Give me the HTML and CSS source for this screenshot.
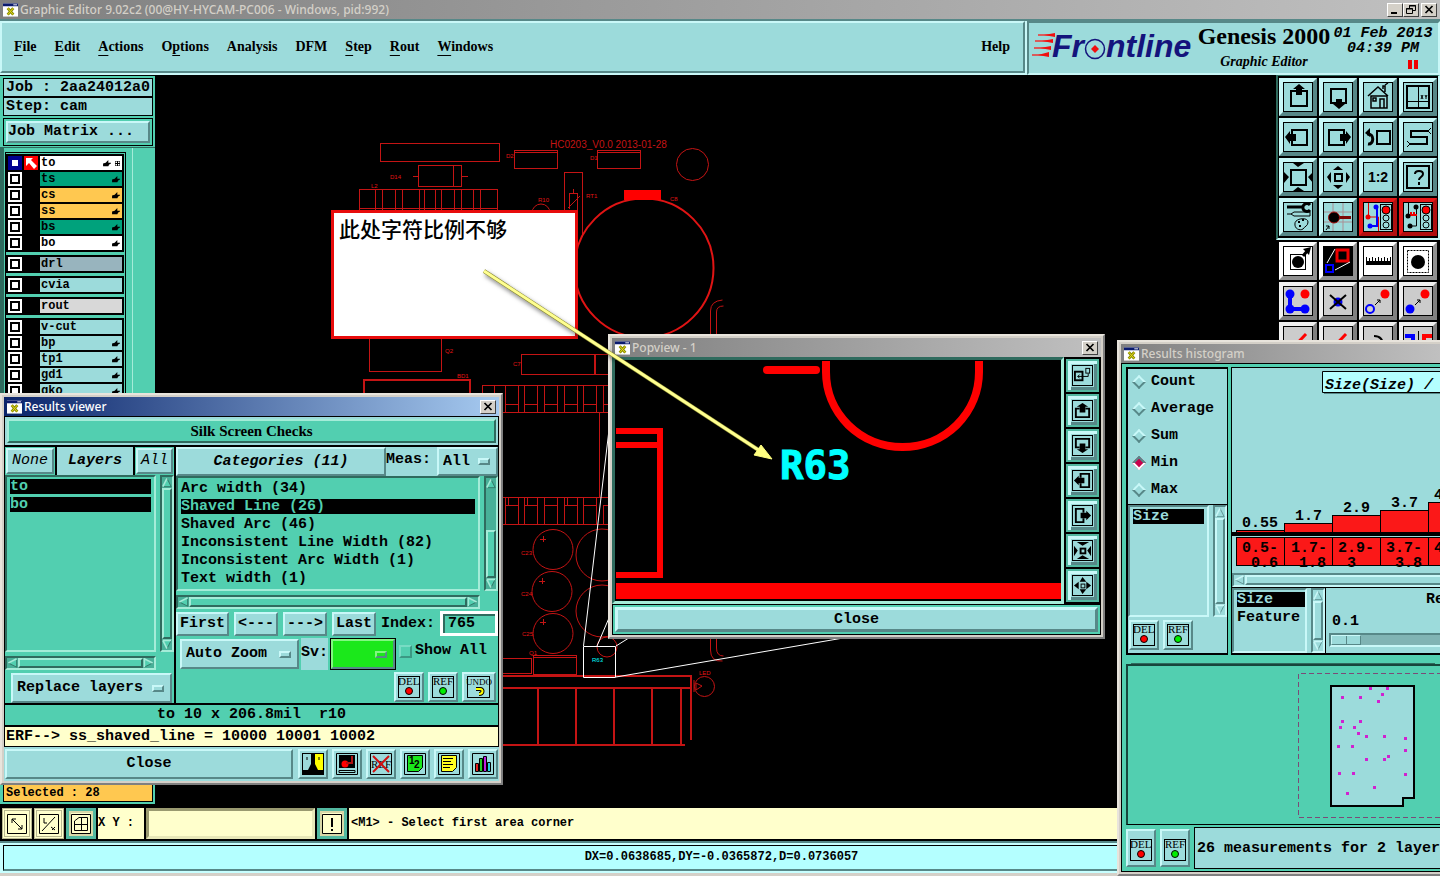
FILE: index.html
```html
<!DOCTYPE html>
<html lang="en">
<head>
	<meta charset="utf-8">
	<title>Graphic Editor 9.02c2</title>
	<link rel="stylesheet" href="styles.css">
</head>
<body>
	<!-- icon set -->
	<svg class="defs" width="0" height="0">
		<symbol id="i-app" viewBox="0 0 16 14"><rect width="16" height="14" fill="#fff"/><rect width="16" height="3" fill="#0a1a6e"/><rect x="11" y="1" width="4" height="1" fill="#fff"/><path d="M5 5l6 7M11 5l-6 7" stroke="#8a8a00" stroke-width="3"/><path d="M5 5l6 7M11 5l-6 7" stroke="#e8e020"/></symbol>
		<symbol id="i-x" viewBox="0 0 10 9"><path d="M1.500 1l7 7M8.500 1l-7 7" stroke="#000" stroke-width="1.700"/></symbol>
		<symbol id="i-hand" viewBox="0 0 9 8"><path d="M0 4l3-1 3-3v3h3v1L7 5 6 7H2L0 7z"/></symbol>
		<symbol id="i-up" viewBox="0 0 30 30"><rect x="8" y="9" width="16" height="15" fill="none" stroke="#000" stroke-width="2"/><path d="M16 2l6 5h-3v6h-6V7h-3z"/></symbol>
		<symbol id="i-down" viewBox="0 0 30 30"><rect x="8" y="7" width="15" height="14" fill="none" stroke="#000" stroke-width="2"/><path d="M16 27l6-5h-3v-5h-6v5h-3z"/></symbol>
		<symbol id="i-left" viewBox="0 0 30 30"><rect x="9" y="8" width="15" height="15" fill="none" stroke="#000" stroke-width="2"/><path d="M2 15l5-6v3h6v7H7v3z"/></symbol>
		<symbol id="i-right" viewBox="0 0 30 30"><rect x="6" y="8" width="15" height="15" fill="none" stroke="#000" stroke-width="2"/><path d="M28 15l-5-6v3h-6v7h6v3z"/></symbol>
		<symbol id="i-home" viewBox="0 0 30 30"><path d="M5 14L15 5l10 9M8 14v12h16V14zM10 16h3v3h-3zM17 26v-9h4v9M20 7V4h2v6M22 3l3-2" fill="none" stroke="#000" stroke-width="1.500"/></symbol>
		<symbol id="i-xy" viewBox="0 0 30 30"><rect x="4" y="4" width="22" height="22" fill="none" stroke="#000" stroke-width="2"/><path d="M15.500 4v22M4 19.500h22M18 13l2 4M20 13l-2 4M22 13l1 2 1-2M23 15v2" fill="none" stroke="#000"/></symbol>
		<symbol id="i-undo" viewBox="0 0 30 30"><rect x="14" y="9" width="13" height="13" fill="none" stroke="#000" stroke-width="2"/><path d="M4 12c8-1 7 11 1 10" fill="none" stroke="#000" stroke-width="3"/><path d="M2 11l5-5v9z"/></symbol>
		<symbol id="i-snake" viewBox="0 0 30 30"><path d="M25 9H8v6h16v7H7" fill="none" stroke="#000" stroke-width="2"/><path d="M25 9l3-3M25 9l3 3M7 22l-3-3M7 22l-3 3" stroke="#000"/></symbol>
		<symbol id="i-in" viewBox="0 0 30 30"><rect x="8" y="8" width="15" height="15" fill="none" stroke="#000" stroke-width="2"/><path d="M15 5l-5-4h11zM15 25l-5 4h11zM6 15l-5-5v11zM25 15l5-5v11z"/></symbol>
		<symbol id="i-out" viewBox="0 0 30 30"><rect x="12" y="12" width="7" height="7" fill="none" stroke="#000" stroke-width="2"/><path d="M15 4l5 4H10zM15 27l5-4H10zM4 15l4-5v11zM27 15l-4-5v11z"/></symbol>
		<symbol id="i-help" viewBox="0 0 30 30"><rect x="4" y="4" width="22" height="22" fill="none" stroke="#000" stroke-width="2"/><path d="M12 12c0-4 8-4 8 0 0 3-4 3-4 6M16 20v3" fill="none" stroke="#000" stroke-width="2"/></symbol>
		<symbol id="i-tools" viewBox="0 0 30 30"><path d="M4 5h17" stroke="#000" stroke-width="3"/><path d="M27 3a4 4 0 1 0 0 5" fill="none" stroke="#000" stroke-width="3"/><path d="M4 12h4l3-2h16v4H11l-3-2" fill="none" stroke="#000"/><path d="M12 21c1-5 13-6 13-1 0 4-3 4-5 7-3 2-9 0-8-6z" fill="none" stroke="#000"/><path d="M15 20h2M19 18h2M16 24h2" stroke="#000" stroke-width="2"/></symbol>
		<symbol id="i-pad" viewBox="0 0 30 30"><path d="M10 0v30M20 0v30M0 10h30M0 20h30" stroke="#a98f94"/><path d="M12 15.500h16" stroke="#7c0808" stroke-width="3"/><circle cx="11" cy="15.500" r="5.500" stroke="#a01010"/><path d="M3 28l3-4m-3 0h3v3" fill="none" stroke="#000"/></symbol>
		<symbol id="i-net1" viewBox="0 0 30 30"><path d="M5.500 0v15h10v15" fill="none" stroke="#e00000"/><path d="M14 6v18H8" fill="none" stroke="#00f" stroke-width="2"/><circle cx="5" cy="15" r="2.500" fill="#e00"/><circle cx="13" cy="5" r="2.500" fill="#00f"/><circle cx="7" cy="24" r="2.500" fill="#00f"/><rect x="17.500" y="2.500" width="11" height="25" fill="none" stroke="#000"/><circle cx="23" cy="8" r="4" fill="#f00" stroke="#000"/><circle cx="23" cy="16" r="3" fill="none" stroke="#000"/><circle cx="23" cy="23" r="3" fill="none" stroke="#000"/></symbol>
		<symbol id="i-net2" viewBox="0 0 30 30"><path d="M5.500 0v15M13.500 6v18H8" fill="none" stroke="#000"/><path d="M5 13h9M8 10v3M11 10v3" stroke="#e00" stroke-width="2"/><circle cx="5" cy="14" r="2.500"/><circle cx="13" cy="5" r="2.500"/><circle cx="7" cy="24" r="2.500"/><rect x="17.500" y="2.500" width="11" height="25" fill="none" stroke="#000"/><circle cx="23" cy="8" r="4" fill="#f00" stroke="#000"/><circle cx="23" cy="16" r="3" fill="none" stroke="#000"/><circle cx="23" cy="23" r="3" fill="none" stroke="#000"/></symbol>
		<symbol id="i-sel" viewBox="0 0 30 30"><rect x="7.500" y="8.500" width="15" height="15" fill="none" stroke="#000"/><circle cx="15" cy="16" r="6"/><path d="M20 10l5-6" stroke="#000" stroke-width="3"/><path d="M28 1l-8 2 6 6z"/></symbol>
		<symbol id="i-area" viewBox="0 0 30 30"><rect width="30" height="30"/><rect x="14" y="4" width="11" height="11" fill="none" stroke="#e00" stroke-width="3"/><rect x="3" y="19" width="7" height="7" fill="none" stroke="#00f" stroke-width="2"/><path d="M4 17L12 3M12 24l15-8" stroke="#fff"/></symbol>
		<symbol id="i-ruler" viewBox="0 0 30 30"><rect x="3" y="15" width="25" height="4"/><path d="M3.500 11v6M6.500 12v5M9.500 11v6M12.500 12v5M15.500 11v6M18.500 12v5M21.500 11v6M24.500 12v5M27.500 11v6" stroke="#000"/></symbol>
		<symbol id="i-dot" viewBox="0 0 30 30"><circle cx="15" cy="16" r="7"/><rect x="4.500" y="4.500" width="21" height="22" fill="none" stroke="#000" stroke-dasharray="2 1"/></symbol>
		<symbol id="i-chain" viewBox="0 0 30 30"><path d="M7 8v15h15" fill="none" stroke="#00f" stroke-width="4"/><circle cx="7" cy="8" r="4.500" fill="#00f"/><circle cx="7" cy="23" r="4.500" fill="#00f"/><circle cx="22" cy="23" r="4.500" fill="#00f"/><circle cx="22" cy="8" r="4.500" fill="#f00"/></symbol>
		<symbol id="i-del" viewBox="0 0 30 30"><circle cx="15" cy="16" r="4.500" fill="#00e"/><path d="M7 9l16 14M23 9L7 23" stroke="#000" stroke-width="2"/></symbol>
		<symbol id="i-copy" viewBox="0 0 30 30"><circle cx="7" cy="23" r="4" fill="none" stroke="#00f" stroke-width="2"/><circle cx="22" cy="8" r="4.500" fill="#f00"/><path d="M12 19l5-5m-3 0h3v3" fill="none" stroke="#000"/></symbol>
		<symbol id="i-move" viewBox="0 0 30 30"><circle cx="7" cy="23" r="4.500" fill="#00f"/><circle cx="22" cy="8" r="4.500" fill="#f00"/><path d="M12 19l5-5m-3 0h3v3" fill="none" stroke="#000"/></symbol>
		<symbol id="i-line" viewBox="0 0 30 30"><path d="M4 28L23 8" stroke="#f00" stroke-width="3"/></symbol>
		<symbol id="i-arc" viewBox="0 0 30 30"><path d="M11 10c6 0 9 4 9 10" fill="none" stroke="#000" stroke-width="2"/></symbol>
		<symbol id="i-mirror" viewBox="0 0 30 30"><path d="M2 10h8v20" fill="none" stroke="#00f" stroke-width="4"/><path d="M29 10h-8v20" fill="none" stroke="#f00" stroke-width="4"/><path d="M15.500 5v25" stroke="#000"/></symbol>
		<!-- 20px set -->
		<symbol id="p-link" viewBox="0 0 20 20"><rect x="2" y="6" width="8" height="9" fill="none" stroke="#000" stroke-width="2"/><rect x="13.500" y="2.500" width="4" height="5" fill="none" stroke="#000"/><path d="M16 8v3H5m2-2L5 11l2 2" fill="none" stroke="#000"/></symbol>
		<symbol id="p-up" viewBox="0 0 20 20"><path d="M7 8H3v9h14V8h-4" fill="none" stroke="#000" stroke-width="2"/><path d="M10 2l6 4h-3v6H7V6H4z"/></symbol>
		<symbol id="p-down" viewBox="0 0 20 20"><path d="M7 12H3V3h14v9h-4" fill="none" stroke="#000" stroke-width="2"/><path d="M10 18l6-4h-3V8H7v6H4z"/></symbol>
		<symbol id="p-left" viewBox="0 0 20 20"><path d="M8 7V3h9v14H8v-4" fill="none" stroke="#000" stroke-width="2"/><path d="M1 10l5-5v2h6v6H6v2z"/></symbol>
		<symbol id="p-right" viewBox="0 0 20 20"><path d="M11 7V3H3v14h8v-4" fill="none" stroke="#000" stroke-width="2"/><path d="M19 10l-5-5v2H8v6h6v2z"/></symbol>
		<symbol id="p-in" viewBox="0 0 20 20"><rect x="8" y="8" width="5" height="5" fill="none" stroke="#000" stroke-width="2"/><path d="M10 5L4 1h13zM10 15l-6 4h13zM5 10L1 5v11zM15 10l4-5v11z"/></symbol>
		<symbol id="p-out" viewBox="0 0 20 20"><rect x="8.500" y="8.500" width="4" height="4" fill="none" stroke="#000"/><path d="M10 1l4 5H7zM10 19l4-5H7zM1 10l5-4v8zM19 10l-5-4v8z"/></symbol>
		<!-- 22px set, captions are set where used -->
		<symbol id="b-red" viewBox="0 0 22 22"><rect x=".5" y=".5" width="21" height="21" fill="none" stroke="#000"/><circle cx="11" cy="15" r="3.500" fill="#f00" stroke="#000"/></symbol>
		<symbol id="b-green" viewBox="0 0 22 22"><rect x=".5" y=".5" width="21" height="21" fill="none" stroke="#000"/><circle cx="11" cy="15" r="3.500" fill="#0e0" stroke="#000"/></symbol>
		<symbol id="b-back" viewBox="0 0 26 22"><rect x="1.500" y=".5" width="22" height="21" fill="none" stroke="#000"/><path d="M10 13h4c4 0 3 5-1 5" fill="none" stroke="#000" stroke-width="4"/><path d="M10 13h4c4 0 3 5-1 5" fill="none" stroke="#ff0" stroke-width="2"/></symbol>
		<!-- scroll arrows -->
		<symbol id="s-up" viewBox="0 0 12 12"><path d="M6 1L1 11h10z" fill="var(--face)" stroke="var(--lo)"/><path d="M6 1L1 11" stroke="var(--hi)" stroke-width="2"/></symbol>
		<symbol id="s-down" viewBox="0 0 12 12"><path d="M1 1h10L6 11z" fill="var(--face)" stroke="var(--lo)"/><path d="M1 1h10M1 1l5 10" stroke="var(--hi)" stroke-width="2"/></symbol>
		<symbol id="s-left" viewBox="0 0 12 12"><path d="M1 6l10-5v10z" fill="var(--face)" stroke="var(--lo)"/><path d="M1 6l10-5" stroke="var(--hi)" stroke-width="2"/></symbol>
		<symbol id="s-right" viewBox="0 0 12 12"><path d="M11 6L1 1v10z" fill="var(--face)" stroke="var(--lo)"/><path d="M1 11V1l10 5" fill="none" stroke="var(--hi)" stroke-width="2"/></symbol>
	</svg>

	<div class="editor">
		<header class="caption">
			<svg class="app"><use href="#i-app"/></svg>
			<h1>Graphic Editor 9.02c2 (00@HY-HYCAM-PC006 - Windows, pid:992)</h1>
			<button class="win" aria-label="Minimize"><svg viewBox="0 0 10 9"><path d="M1 8h6" stroke="#000" stroke-width="2"/></svg></button>
			<button class="win" aria-label="Restore"><svg viewBox="0 0 10 9"><path d="M3.500 3V.5h6v5H7M3 1h7M.5 3.500h6v5h-6zM0 4h7" fill="none" stroke="#000"/></svg></button>
			<button class="win last" aria-label="Close"><svg><use href="#i-x"/></svg></button>
		</header>

		<div class="topbar">
			<nav class="menu bevel">
				<button><u>F</u>ile</button>
				<button><u>E</u>dit</button>
				<button><u>A</u>ctions</button>
				<button>O<u>p</u>tions</button>
				<button>Analysis</button>
				<button>DFM</button>
				<button><u>S</u>tep</button>
				<button><u>R</u>out</button>
				<button><u>W</u>indows</button>
				<button class="help">Help</button>
			</nav>
			<div class="brand">
				<svg class="logo" viewBox="0 0 164 34" role="img" aria-label="Frontline">
					<path d="M6 5h17M3 11h18M2 18h17M0 25h17" stroke="#e33" stroke-width="1.500"/>
					<path d="M12 5l11-2v4zM10 11l11-2v4zM8 18l11-2v4zM6 25l11-3v5z" fill="#f01010"/>
					<text x="20" y="27">Fr</text>
					<circle cx="63" cy="19" r="9.500" fill="none" stroke="#14147c" stroke-width="1.500"/>
					<path d="M63 15l4 4-4 4-4-4z" fill="#f01010"/>
					<text x="74" y="27">ntline</text>
				</svg>
				<div class="product">
					<strong>Genesis 2000</strong>
					<em>Graphic Editor</em>
				</div>
				<div class="clock">
					<span>01 Feb 2013</span>
					<span>04:39 PM</span>
					<svg viewBox="0 0 10 9"><path d="M0 0h4v9H0zM6 0h4v9H6z" fill="#f00000"/></svg>
				</div>
			</div>
		</div>

		<main class="work">
			<aside class="side">
				<div class="info">Job : 2aa24012a0</div>
				<div class="info">Step: cam</div>
				<div class="matrix"><button class="bevel">Job Matrix ...</button></div>
				<div class="layers">
					<div class="stack">
						<div class="group">
							<label class="layer on"><input type="checkbox" checked><span class="mark"><svg viewBox="0 0 14 14"><rect width="14" height="14" fill="#f00"/><path d="M2 2h7L7 4l6 6-3 3-5-6-3 3z" fill="#fff"/></svg></span><span class="name white">to<svg class="hand"><use href="#i-hand"/></svg><svg class="grid" viewBox="0 0 5 5"><path d="M0 0h5v5H0zM2.500 0v5M0 2.500h5" fill="none" stroke="#000"/></svg></span></label>
							<label class="layer"><input type="checkbox"><span class="mark"></span><span class="name green">ts<svg class="hand"><use href="#i-hand"/></svg></span></label>
							<label class="layer"><input type="checkbox"><span class="mark"></span><span class="name orange">cs<svg class="hand"><use href="#i-hand"/></svg></span></label>
							<label class="layer"><input type="checkbox"><span class="mark"></span><span class="name orange">ss<svg class="hand"><use href="#i-hand"/></svg></span></label>
							<label class="layer"><input type="checkbox"><span class="mark"></span><span class="name green">bs<svg class="hand"><use href="#i-hand"/></svg></span></label>
							<label class="layer"><input type="checkbox"><span class="mark"></span><span class="name white">bo<svg class="hand"><use href="#i-hand"/></svg></span></label>
						</div>
						<div class="group">
							<label class="layer"><input type="checkbox"><span class="mark"></span><span class="name steel">drl</span></label>
						</div>
						<div class="group">
							<label class="layer"><input type="checkbox"><span class="mark"></span><span class="name">cvia</span></label>
						</div>
						<div class="group">
							<label class="layer"><input type="checkbox"><span class="mark"></span><span class="name grey">rout</span></label>
						</div>
						<div class="group">
							<label class="layer"><input type="checkbox"><span class="mark"></span><span class="name">v-cut</span></label>
							<label class="layer"><input type="checkbox"><span class="mark"></span><span class="name">bp<svg class="hand"><use href="#i-hand"/></svg></span></label>
							<label class="layer"><input type="checkbox"><span class="mark"></span><span class="name">tp1<svg class="hand"><use href="#i-hand"/></svg></span></label>
							<label class="layer"><input type="checkbox"><span class="mark"></span><span class="name">gd1<svg class="hand"><use href="#i-hand"/></svg></span></label>
							<label class="layer"><input type="checkbox"><span class="mark"></span><span class="name">gko<svg class="hand"><use href="#i-hand"/></svg></span></label>
						</div>
					</div>
				</div>
				<div class="selected">Selected : 28</div>
			</aside>

			<svg class="board">
				<g transform="translate(-155 -75)">
					<g fill="none" stroke="#c41414" shape-rendering="crispEdges">
						<path d="M380.500 143.500h119v18h-119zM418.500 165.500h43v21h-43zM453.500 165v21M413 176.500h5M461 176.500h7"/>
						<path d="M514.500 150.500h43v18h-43zM514 152.500h43M597.500 150.500h43v18h-43zM597 152.500h43"/>
						<path d="M359.500 211v-21.500h138V211M375.500 190v20M382.500 190v20M395.500 190v20M402.500 190v20M419.500 190v20M424.500 190v20M435.500 190v20M441.500 190v20M454.500 190v20M461.500 190v20M473.500 190v20M480.500 190v20M359 208.500h139"/>
						<path d="M564.500 172.500h18v64M564.500 172v38M569.500 193.500h8v16M569.500 193v16M573 189v4M568 208l12-12"/>
						<path d="M369.500 338v33h72v-33M521.500 354.500h73v20h-73zM595.500 354.500h14v20h-14z"/>
						<path d="M363.500 395v-15h106v15" stroke-width="2"/>
						<path d="M482.500 395v-9.500H609M494.500 386v9M505.500 386v26M518.500 386v26M524.500 386v26M537.500 386v26M544.500 386v26M557.500 386v26M564.500 386v26M577.500 386v26M583.500 386v26M596.500 386v26M603.500 386v26M500 412.500h109M505 404.500h13M524 404.500h13M544 404.500h13M564 404.500h13M583 404.500h13M603 404.500h6M599.500 412v85"/>
						<path d="M500 497.500h109M500 524.500h109M505.500 498v26M508.500 498v8M518.500 498v26M524.500 498v26M527.500 498v8M537.500 498v26M544.500 498v26M557.500 498v26M564.500 498v26M567.500 498v8M577.500 498v26M583.500 498v26M596.500 498v26M603.500 505v19M505 505.500h13M524 505.500h13M544 505.500h13M564 505.500h13M583 505.500h13M603 505.500h6"/>
						<path d="M500 658.500h31.500v15H500M533.500 655.500h43v19h-43zM533 657.500h43"/>
						<path d="M540 539h6M543 536v6M539 581h6M542 578v6M540 622h6M543 619v6"/>
						<path d="M500 676h191v64M500 688h191M500 745h185M538 688v57M576 688v57M614 688v57M652 688v57M681 688v57" stroke-width="2"/>
					</g>
					<g fill="none" stroke="#c41414">
						<circle cx="692.500" cy="164.500" r="16"/>
						<circle cx="644" cy="268" r="69.500" stroke-width="2" stroke="#e01414"/>
						<circle cx="541" cy="213" r="9"/>
						<circle cx="553" cy="549.500" r="20"/>
						<circle cx="552" cy="591.500" r="20"/>
						<circle cx="553" cy="633.500" r="20"/>
						<circle cx="602" cy="555" r="26"/>
						<circle cx="602" cy="611" r="26"/>
						<circle cx="607" cy="647" r="10"/>
						<circle cx="704.500" cy="686.500" r="10"/>
						<path d="M710.500 340v-29q0-10 12-11M716.500 340v-28q0-6 7-6M710.500 630v20q0 12 12 11M716.500 630v18q0 8 7 8M696 683l6 3-6 4zM694 680v12"/>
					</g>
					<rect x="624" y="190" width="37" height="10" fill="#f00"/>
					<g class="silk">
						<text class="rev" x="550" y="148">HC0203_V0.0 2013-01-28</text>
						<text x="506" y="158">D2</text>
						<text x="590" y="160">D1</text>
						<text x="390" y="179">D14</text>
						<text x="371" y="188">L2</text>
						<text x="538" y="202">R10</text>
						<text x="586" y="198">RT1</text>
						<text x="670" y="201">C8</text>
						<text x="445" y="353">Q2</text>
						<text x="513" y="366">C7</text>
						<text x="457" y="378">BD1</text>
						<text x="521" y="555">C23</text>
						<text x="521" y="596">C24</text>
						<text x="522" y="636">C25</text>
						<text x="529" y="655">Q1</text>
						<text x="699" y="675">LED</text>
						<text class="hot" x="592" y="662">R63</text>
					</g>
					<path d="M583.500 646.500h32v31h-32zM583.500 646l25-212M597 646l12-28M616 646l16-10M616 677l239-41" fill="none" stroke="#fff"/>
				</g>
			</svg>

			<div class="tools">
				<div class="pad">
					<button><svg><use href="#i-up"/></svg></button>
					<button><svg><use href="#i-down"/></svg></button>
					<button><svg><use href="#i-home"/></svg></button>
					<button><svg><use href="#i-xy"/></svg></button>
					<button><svg><use href="#i-left"/></svg></button>
					<button><svg><use href="#i-right"/></svg></button>
					<button><svg><use href="#i-undo"/></svg></button>
					<button><svg><use href="#i-snake"/></svg></button>
					<button><svg><use href="#i-in"/></svg></button>
					<button><svg><use href="#i-out"/></svg></button>
					<button><svg viewBox="0 0 30 30"><text class="ratio" x="15" y="20">1:2</text></svg></button>
					<button><svg><use href="#i-help"/></svg></button>
					<button><svg><use href="#i-tools"/></svg></button>
					<button><svg><use href="#i-pad"/></svg></button>
					<button class="alert"><svg><use href="#i-net1"/></svg></button>
					<button class="alert"><svg><use href="#i-net2"/></svg></button>
				</div>
				<div class="pad plain">
					<button class="lit"><svg><use href="#i-sel"/></svg></button>
					<button class="lit"><svg><use href="#i-area"/></svg></button>
					<button class="lit"><svg><use href="#i-ruler"/></svg></button>
					<button class="lit"><svg><use href="#i-dot"/></svg></button>
					<button><svg><use href="#i-chain"/></svg></button>
					<button><svg><use href="#i-del"/></svg></button>
					<button><svg><use href="#i-copy"/></svg></button>
					<button><svg><use href="#i-move"/></svg></button>
					<button><svg><use href="#i-line"/></svg></button>
					<button><svg><use href="#i-line"/></svg></button>
					<button><svg><use href="#i-arc"/></svg></button>
					<button><svg><use href="#i-mirror"/></svg></button>
				</div>
			</div>
		</main>

		<div class="command">
			<button class="cmd" aria-label="Snap"><svg viewBox="0 0 20 20"><path d="M.5.500h19v19H.500zM5 5l10 10M5 9V5h4M15 11v4h-4" fill="none" stroke="#000"/></svg></button>
			<button class="cmd" aria-label="Angle"><svg viewBox="0 0 20 20"><path d="M.5.500h19v19H.500zM3 17L16 3M5 4v5h3M12 13l4 3M16 13l-3 3" fill="none" stroke="#000"/></svg></button>
			<button class="cmd ring" aria-label="Grid"><svg viewBox="0 0 20 20"><path d="M.5.500h19v19H.500zM3.500 16.500V7L8 3.500h8.500v13zM10.500 3v14M3 10.500h14" fill="none" stroke="#000"/></svg></button>
			<label for="xy">X Y :</label>
			<input id="xy" type="text">
			<button class="cmd ring" aria-label="Alert"><svg viewBox="0 0 20 20"><path d="M.5.500h19v19H.500z" fill="none" stroke="#000"/><path d="M10 4v9M10 15v2" stroke="#000" stroke-width="2"/></svg></button>
			<output>&lt;M1&gt; - Select first area corner</output>
		</div>
		<footer class="status"><div>DX=0.0638685,DY=-0.0365872,D=0.0736057</div></footer>
	</div>

	<div class="note">此处字符比例不够</div>

	<!-- results viewer -->
	<section class="window results">
		<header class="caption active">
			<svg class="app"><use href="#i-app"/></svg>
			<h2>Results viewer</h2>
			<button class="win last" aria-label="Close"><svg><use href="#i-x"/></svg></button>
		</header>
		<div class="check"><div>Silk Screen Checks</div></div>
		<div class="panes">
			<div class="left">
				<div class="heads">
					<button class="bevel thin">None</button>
					<span>Layers</span>
					<button class="bevel thin">All</button>
				</div>
				<div class="lister">
					<ul class="list">
						<li class="sel">to</li>
						<li class="sel">bo</li>
					</ul>
					<div class="vbar"><svg><use href="#s-up"/></svg><i></i><svg><use href="#s-down"/></svg></div>
				</div>
				<div class="hbar"><svg><use href="#s-left"/></svg><i></i><svg><use href="#s-right"/></svg></div>
				<div class="option wide"><select aria-label="Layer mode"><option>Replace layers</option></select><i></i></div>
			</div>
			<div class="right">
				<div class="cats">
					<button class="bevel">Categories (11)</button>
					<label for="meas">Meas:</label>
					<div class="option"><select id="meas"><option>All</option></select><i></i></div>
				</div>
				<div class="lister">
					<ul class="list">
						<li>Arc width (34)</li>
						<li class="sel">Shaved Line (26)</li>
						<li>Shaved Arc (46)</li>
						<li>Inconsistent Line Width (82)</li>
						<li>Inconsistent Arc Width (1)</li>
						<li>Text width (1)</li>
					</ul>
					<div class="vbar low"><svg><use href="#s-up"/></svg><i></i><svg><use href="#s-down"/></svg></div>
				</div>
				<div class="hbar"><svg><use href="#s-left"/></svg><i></i><svg><use href="#s-right"/></svg></div>
				<div class="steps">
					<button class="bevel">First</button>
					<button class="bevel">&lt;---</button>
					<button class="bevel">---&gt;</button>
					<button class="bevel">Last</button>
					<label for="index">Index:</label>
					<input id="index" type="text" value="765">
				</div>
				<div class="zooms">
					<div class="option"><select aria-label="Zoom mode"><option>Auto Zoom</option></select><i></i></div>
					<label for="sv">Sv:</label>
					<div class="option go"><select id="sv"><option></option></select><i></i></div>
					<label class="all"><input type="checkbox">Show All</label>
				</div>
				<div class="acts">
					<button class="mini"><svg viewBox="0 0 22 22"><use href="#b-red"/><text class="cap" x="0" y="9">DEL</text></svg></button>
					<button class="mini"><svg viewBox="0 0 22 22"><use href="#b-green"/><text class="cap" x="1" y="9">REF</text></svg></button>
					<button class="mini broad"><svg viewBox="0 0 26 22"><use href="#b-back"/><text class="cap undo" x="0" y="9">UNDO</text></svg></button>
				</div>
			</div>
		</div>
		<div class="measure">to 10 x 206.8mil &nbsp;r10</div>
		<div class="erf">ERF--&gt; ss_shaved_line = 10000 10001 10002</div>
		<div class="bottom">
			<button class="bevel close">Close</button>
			<button class="mini"><svg viewBox="0 0 22 22"><rect width="22" height="22"/><path d="M1 1h8v10l-3 6H1z" fill="#9cdbdb"/><path d="M13 1h8v16h-5l-3-6z" fill="#ff0"/><path d="M5 4v3M17 4v3" stroke="#000"/></svg></button>
			<button class="mini"><svg viewBox="0 0 22 22"><path d="M.5.500h21v21H.500z" fill="none" stroke="#000"/><path d="M3 2h16v13H3z"/><circle cx="9" cy="11" r="3.500" fill="#f00"/><path d="M10 10h6V3" fill="none" stroke="#b01010" stroke-width="2"/><path d="M3 17.500h16v2H3z" fill="none" stroke="#000"/></svg></button>
			<button class="mini"><svg viewBox="0 0 22 22"><path d="M.5.500h21v21H.500z" fill="none" stroke="#000"/><text class="cap" x="1" y="15">REF</text><path d="M3 3l16 16M19 3L3 19" stroke="#d01010" stroke-width="2"/></svg></button>
			<button class="mini"><svg viewBox="0 0 22 22"><path d="M.5.500h21v21H.500z" fill="none" stroke="#000"/><path d="M3.500 2.500h15v12l-4 4h-11z" fill="#1be81b" stroke="#000"/><text class="half" x="5" y="11">1</text><text class="half" x="10" y="15">2</text></svg></button>
			<button class="mini"><svg viewBox="0 0 22 22"><path d="M.5.500h21v21H.500z" fill="none" stroke="#000"/><path d="M3.500 2.500h15v12l-4 4h-11z" fill="#ffff20" stroke="#000"/><path d="M5 5.500h10M5 8.500h8M5 11.500h10M5 14.500h7" stroke="#000"/></svg></button>
			<button class="mini"><svg viewBox="0 0 22 22"><path d="M.5.500h21v21H.500z" fill="none" stroke="#000"/><path d="M3.500 10.500h3v8h-3z" fill="#e02020" stroke="#000"/><path d="M7.500 5.500h3v13h-3z" fill="#20d020" stroke="#000"/><path d="M11.500 3.500h3v15h-3z" fill="#c020e0" stroke="#000"/><path d="M15.500 9.500h3v9h-3z" fill="#20d0e0" stroke="#000"/></svg></button>
		</div>
	</section>

	<!-- popview -->
	<section class="window popview">
		<header class="caption">
			<svg class="app"><use href="#i-app"/></svg>
			<h2>Popview - 1</h2>
			<button class="win last" aria-label="Close"><svg><use href="#i-x"/></svg></button>
		</header>
		<div class="view">
			<svg class="detail">
				<g transform="translate(-615 -360)">
					<g fill="none" stroke="#f00" stroke-width="6">
						<path d="M616 431h44v144h-44M616 445h47"/>
						<path d="M767 370h49" stroke-width="8" stroke-linecap="round"/>
						<path d="M826 361v11a76.500 75 0 0 0 153 0v-11" stroke-width="8"/>
					</g>
					<rect x="616" y="583" width="445" height="16" fill="#f00"/>
					<text x="780" y="479">R63</text>
				</g>
			</svg>
			<div class="nav">
				<button><svg><use href="#p-link"/></svg></button>
				<button><svg><use href="#p-up"/></svg></button>
				<button><svg><use href="#p-down"/></svg></button>
				<button><svg><use href="#p-left"/></svg></button>
				<button><svg><use href="#p-right"/></svg></button>
				<button><svg><use href="#p-in"/></svg></button>
				<button><svg><use href="#p-out"/></svg></button>
			</div>
		</div>
		<div class="foot"><button class="bevel">Close</button></div>
	</section>

	<!-- histogram -->
	<section class="window histogram">
		<header class="caption">
			<svg class="app"><use href="#i-app"/></svg>
			<h2>Results histogram</h2>
		</header>
		<div class="body">
			<div class="upper">
				<div class="stats">
					<div class="modes">
						<label><input type="radio" name="mode">Count</label>
						<label><input type="radio" name="mode">Average</label>
						<label><input type="radio" name="mode">Sum</label>
						<label><input type="radio" name="mode" checked>Min</label>
						<label><input type="radio" name="mode">Max</label>
					</div>
					<div class="lister">
						<ul class="list"><li class="sel">Size</li></ul>
						<div class="vbar"><svg><use href="#s-up"/></svg><i></i><svg><use href="#s-down"/></svg></div>
					</div>
					<div class="acts">
						<button class="mini"><svg viewBox="0 0 22 22"><use href="#b-red"/><text class="cap" x="0" y="9">DEL</text></svg></button>
						<button class="mini"><svg viewBox="0 0 22 22"><use href="#b-green"/><text class="cap" x="1" y="9">REF</text></svg></button>
					</div>
				</div>
				<div class="plot">
					<svg class="chart">
						<g transform="translate(-1232 -368)">
							<path d="M1324 373h120v21h-120z" fill="#578888"/>
							<path d="M1322.500 371.500h120v21h-120z" fill="#b4ffff" stroke="#000"/>
							<text class="head" x="1325" y="389">Size(Size) /</text>
							<g fill="#fb1818" stroke="#000" shape-rendering="crispEdges">
								<path d="M1236.500 530.500h48v3h-48zM1284.500 523.500h48v10h-48zM1332.500 515.500h48v18h-48zM1380.500 510.500h48v23h-48zM1428.500 502.500h48v31h-48z"/>
								<path d="M1236.500 537.500h48v28h-48zM1284.500 537.500h48v28h-48zM1332.500 537.500h48v28h-48zM1380.500 537.500h48v28h-48zM1428.500 537.500h48v28h-48z"/>
							</g>
							<path d="M1230 532h220v4h-220z"/>
							<text x="1242" y="527">0.55</text>
							<text x="1295" y="520">1.7</text>
							<text x="1343" y="512">2.9</text>
							<text x="1391" y="507">3.7</text>
							<text x="1434" y="499">4.4</text>
							<text x="1242" y="552">0.5-</text><text x="1251" y="567">0.6</text>
							<text x="1291" y="552">1.7-</text><text x="1299" y="567">1.8</text>
							<text x="1338" y="552">2.9-</text><text x="1347" y="567">3</text>
							<text x="1386" y="552">3.7-</text><text x="1395" y="567">3.8</text>
							<text x="1434" y="552">4.4-</text>
						</g>
					</svg>
					<div class="hbar"><svg><use href="#s-left"/></svg><i></i></div>
					<div class="range">
						<div class="lister">
							<ul class="list"><li class="sel">Size</li><li>Feature</li></ul>
							<div class="vbar"><svg><use href="#s-up"/></svg><i></i><svg><use href="#s-down"/></svg></div>
						</div>
						<div class="res">
							<span class="title">Resolution</span>
							<label for="res">0.1</label>
							<input id="res" type="range" value="0">
						</div>
					</div>
				</div>
			</div>
			<div class="map">
				<svg>
					<g transform="translate(-1128 -665)">
						<path d="M1450 672.500h-151.500v144H1450" fill="none" stroke="#7c4a78" stroke-dasharray="5 3"/>
						<path d="M1331 685h83v112h-11v8h-72z" fill="#9cdbdb" stroke="#000" stroke-width="2"/>
						<path d="M1369 686h3v3h-3zM1386 686h3v3h-3zM1381 692h3v3h-3zM1341 695h3v3h-3zM1359 695h3v3h-3zM1377 699h3v3h-3zM1341 719h3v3h-3zM1359 719h3v3h-3zM1339 725h3v3h-3zM1353 725h3v3h-3zM1357 731h3v3h-3zM1365 734h3v3h-3zM1383 734h3v3h-3zM1404 736h3v3h-3zM1337 744h3v3h-3zM1351 744h3v3h-3zM1404 748h3v3h-3zM1387 754h3v3h-3zM1365 757h3v3h-3zM1383 757h3v3h-3zM1338 771h3v3h-3zM1352 771h3v3h-3zM1404 772h3v3h-3zM1373 785h3v3h-3zM1346 791h3v3h-3z" fill="#d020d0"/>
					</g>
				</svg>
			</div>
			<div class="summary">
				<button class="mini"><svg viewBox="0 0 22 22"><use href="#b-red"/><text class="cap" x="0" y="9">DEL</text></svg></button>
				<button class="mini"><svg viewBox="0 0 22 22"><use href="#b-green"/><text class="cap" x="1" y="9">REF</text></svg></button>
				<div>26 measurements for 2 layers</div>
			</div>
		</div>
	</section>

	<svg class="pointer" viewBox="0 0 300 200">
		<path d="M6 7l276 180" stroke="#8a8a30" stroke-width="4"/>
		<path d="M6 7l276 180" stroke="#ffff90" stroke-width="3"/>
		<path d="M294 195l-18-4 3-4 4-6z" fill="#ffff80" stroke="#ffff80"/>
	</svg>
</body>
</html>
```
FILE: styles.css
```css
* {
	box-sizing: border-box;
}

:root {
	--face: #9cdbdb;
	--hi: #c9f8f8;
	--lo: #578888;
}

body {
	margin: 0;
	height: 100vh;
	overflow: hidden;
	position: relative;
	background: #000;
	color: #000;
	font: bold 15px/18px "Liberation Mono", monospace;
}

button, input, select {
	font: inherit;
	color: inherit;
	margin: 0;
	padding: 0;
	border: 0;
	border-radius: 0;
	background: var(--face);
}

svg {
	display: block;
	flex: none;
}

.defs {
	position: absolute;
}

.cap {
	font: 11px "Liberation Serif", serif;
}

.cap.undo {
	font-size: 9px;
}

.half {
	font: bold 10px "Liberation Sans", sans-serif;
}

.bevel {
	background: var(--face);
	border: 3px solid;
	border-color: var(--hi) var(--lo) var(--lo) var(--hi);
}

/* window captions */
.caption {
	display: flex;
	align-items: center;
	height: 19px;
	padding: 0 3px;
	background: linear-gradient(90deg, #808080, #c0c0c0);
	color: #d4d0c8;
}

.caption.active {
	background: linear-gradient(90deg, #0a246a, #a6caf0);
	color: #fff;
}

.caption h1, .caption h2 {
	flex: 1;
	margin: 0 0 0 2px;
	font: 500 12px/18px "Noto Sans", sans-serif;
	white-space: nowrap;
}

.app {
	width: 15px;
	height: 14px;
}

.win {
	display: flex;
	align-items: center;
	justify-content: center;
	width: 16px;
	height: 14px;
	background: #d4d0c8;
	border: 1px solid;
	border-color: #fff #404040 #404040 #fff;
}

.win.last {
	margin-left: 2px;
}

.win svg {
	width: 10px;
	height: 9px;
}

/* main editor */
.editor {
	display: flex;
	flex-direction: column;
	height: 100vh;
}

.topbar {
	display: flex;
	height: 56px;
	background: var(--hi);
	border-top: 2px solid var(--lo);
}

.menu {
	flex: 1;
	display: flex;
	align-items: center;
	gap: 18px;
	margin-bottom: 2px;
	padding: 0 13px 0 12px;
	border-width: 2px;
	font: bold 14px/18px "Liberation Serif", serif;
}

.menu u {
	text-underline-offset: 4px;
}

.menu .help {
	margin-left: auto;
}

.brand {
	display: flex;
	width: 413px;
	margin-left: 2px;
	padding: 3px 4px 0 3px;
	background: var(--face);
	border: 2px solid;
	border-color: var(--lo) var(--hi) var(--hi) var(--lo);
}

.logo {
	width: 164px;
	height: 34px;
	margin-top: 4px;
}

.logo text {
	font: italic bold 32px "Liberation Sans", sans-serif;
	fill: #14147c;
}

.product {
	display: flex;
	flex-direction: column;
	align-items: center;
	width: 136px;
	font-family: "Liberation Serif", serif;
	white-space: nowrap;
}

.product strong {
	font-size: 24px;
	line-height: 20px;
}

.product em {
	margin-top: 7px;
	font-size: 14px;
}

.clock {
	flex: 1;
	display: flex;
	flex-direction: column;
	align-items: center;
	font-style: italic;
	line-height: 15px;
	white-space: nowrap;
}

.clock svg {
	width: 10px;
	height: 9px;
	margin: 4px 16px 0 0;
	align-self: flex-end;
}

.work {
	flex: 1;
	display: flex;
	min-height: 0;
}

/* left side */
.side {
	--face: #52cfb0;
	--hi: #a4ecd8;
	--lo: #2f6b5e;
	display: flex;
	flex-direction: column;
	width: 155px;
	margin-bottom: 3px;
	padding: 2px 2px 2px 3px;
	background: var(--face);
	border-top: 1px solid #000;
}

.info {
	padding-left: 2px;
	height: 19px;
	line-height: 17px;
	border: 1px solid #000;
	background: #9cdbdb;
	white-space: nowrap;
	overflow: hidden;
}

.matrix {
	--face: #9cdbdb;
	--hi: #c9f8f8;
	--lo: #578888;
	margin: 2px 0 1px;
	padding: 2px;
	border: 1px solid #000;
}

.matrix button {
	width: 100%;
	height: 22px;
	line-height: 16px;
	text-align: left;
	border-width: 2px;
}

.layers {
	flex: 1;
	min-height: 0;
	overflow: hidden;
	margin: 0 -2px 3px -3px;
	padding: 4px 0 0 1px;
	background: linear-gradient(90deg, transparent 128px, var(--hi) 128px, var(--hi) 129px, transparent 129px) #52cfb0;
	border-top: 1px solid var(--lo);
	border-left: 4px solid var(--lo);
}

.stack {
	display: flex;
	flex-direction: column;
	gap: 3px;
	width: 121px;
	height: 100%;
	padding: 1px 1px 1px 0;
	border: 1px solid #000;
	font-size: 12px;
}

.group {
	padding: 1px 2px;
	background: #000;
}

.layer {
	display: flex;
	gap: 2px;
	height: 16px;
	padding: 1px 0;
}

.layer input {
	appearance: none;
	width: 14px;
	height: 14px;
	background: #fff;
	border: 2px solid #fff;
	box-shadow: inset 0 0 0 2px #000;
}

.layer.on input {
	border-color: #000090;
	box-shadow: inset 0 0 0 2px #000090;
}

.mark {
	width: 14px;
	height: 14px;
}

.mark svg {
	width: 14px;
	height: 14px;
}

.name {
	flex: 1;
	display: flex;
	align-items: center;
	gap: 4px;
	padding: 0 2px 0 1px;
	line-height: 14px;
	background: #9cdbdb;
}

.name.white { background: #fff; }
.name.green { background: #00a27c; }
.name.orange { background: #ffc850; }
.name.steel { background: #98b4be; }
.name.grey { background: #d8d8d8; }

.hand {
	width: 8px;
	height: 7px;
	margin-left: auto;
}

.grid {
	width: 5px;
	height: 5px;
}

.selected {
	height: 18px;
	padding-left: 2px;
	background: #ffc850;
	border: 1px solid #000;
	font-size: 12px;
	line-height: 16px;
}

.board {
	flex: 1;
	height: 100%;
	min-width: 0;
}

.silk text {
	font: 6px "Liberation Sans", sans-serif;
	fill: #e01414;
}

.silk .rev {
	font-size: 10px;
	fill: #c41414;
}

.silk .hot {
	fill: #0ff;
}

/* tool palette */
.tools {
	width: 164px;
	background: #000;
}

.pad {
	display: grid;
	grid-template-columns: repeat(4, 38px);
	gap: 2px;
	padding: 2px 1px;
	border-left: 2px solid #2f6b5e;
	border-top: 1px solid #2f6b5e;
	border-bottom: 2px solid var(--hi);
	border-right: 2px solid var(--hi);
}

.pad button {
	height: 38px;
	border: 4px solid;
	border-color: var(--hi) var(--lo) var(--lo) var(--hi);
}

.pad svg {
	width: 30px;
	height: 30px;
	outline: 1px solid #000;
	outline-offset: -1px;
}

.pad .alert {
	border-color: #e81818 #b01010 #b01010 #e81818;
}

.pad.plain {
	border-color: #000;
	border-bottom: 0;
	border-top: 0;
}

.plain button {
	--hi: #f0f0f0;
	--lo: #808080;
	background: #ccc;
}

.plain .lit {
	--hi: #fff;
	--lo: #909090;
	background: #fff;
}

.ratio {
	font: bold 14px "Liberation Sans", sans-serif;
	text-anchor: middle;
}

/* command line */
.command {
	display: flex;
	gap: 2px;
	height: 34px;
	padding: 1px 2px;
	background: #000;
	border-bottom: 1px solid #000;
	font-size: 12px;
}

.command > * {
	background: #ffffcc;
}

.cmd {
	display: flex;
	align-items: center;
	justify-content: center;
	width: 30px;
	border: 3px double #b8b890;
}

.cmd.ring {
	border: 3px solid #52b8a0;
	box-shadow: inset 0 0 0 2px #d8d8a8;
}

.cmd svg {
	width: 20px;
	height: 20px;
}

.command label {
	width: 46px;
	line-height: 30px;
	white-space: nowrap;
}

.command input {
	width: 169px;
	padding: 0 4px;
	border: 3px solid;
	border-color: #9a9a70 #e8e8b8 #e8e8b8 #9a9a70;
}

.command output {
	flex: 1;
	padding-left: 2px;
	line-height: 30px;
}

.status {
	height: 35px;
	padding: 2px 0 4px 3px;
	background: #c8ffff;
	border-top: 2px solid #578888;
	border-bottom: 3px solid #d4d0c8;
	font-size: 12px;
	text-align: center;
}

.status div {
	height: 26px;
	line-height: 22px;
	background: #b4ffff;
	border: 1px solid #000;
	border-bottom: 2px solid #578888;
}

/* annotation */
.note {
	position: absolute;
	left: 331px;
	top: 210px;
	width: 247px;
	height: 129px;
	padding: 1px 5px;
	background: #fff;
	border: 3px solid #e80c0c;
	font: 500 21px/28px "Noto Sans CJK SC", sans-serif;
}

.pointer {
	position: absolute;
	left: 478px;
	top: 264px;
	width: 300px;
	height: 200px;
	pointer-events: none;
	filter: drop-shadow(2px 3px 2px rgba(0, 0, 0, .5));
}

/* floating windows */
.window {
	position: absolute;
	display: flex;
	flex-direction: column;
	padding: 2px;
	background: #d4d0c8;
	border: 2px solid;
	border-color: #e8e4dc #808080 #808080 #e8e4dc;
}

.list {
	flex: 1;
	min-width: 0;
	margin: 0;
	padding: 2px 3px;
	list-style: none;
	overflow: hidden;
	white-space: nowrap;
	background: var(--face);
	border: 2px solid;
	border-color: var(--lo) var(--hi) var(--hi) var(--lo);
}

.list li {
	height: 15px;
	margin-bottom: 3px;
	line-height: 16px;
}

.list .sel {
	background: #000;
	color: var(--face);
}

.lister {
	display: flex;
	gap: 4px;
}

.vbar, .hbar {
	display: flex;
	background: var(--trough, var(--face));
	border: 2px solid;
	border-color: var(--lo) var(--hi) var(--hi) var(--lo);
}

.vbar {
	flex-direction: column;
	width: 14px;
}

.hbar {
	height: 14px;
}

.vbar svg {
	width: 10px;
	height: 11px;
}

.hbar svg {
	width: 11px;
	height: 10px;
}

.vbar i, .hbar i {
	flex: 1;
	background: var(--face);
	border: 2px solid;
	border-color: var(--hi) var(--lo) var(--lo) var(--hi);
}

.vbar.low i {
	margin-top: 41px;
}

.option {
	--face: #9cdbdb;
	--hi: #c9f8f8;
	--lo: #578888;
	display: flex;
	align-items: center;
	gap: 8px;
	padding: 0 6px 0 4px;
	background: var(--face);
	border: 2px solid;
	border-color: var(--hi) var(--lo) var(--lo) var(--hi);
}

.option select {
	flex: 1;
	min-width: 0;
	appearance: none;
	background: none;
}

.option i {
	width: 12px;
	height: 7px;
	border: 2px solid;
	border-color: var(--hi) var(--lo) var(--lo) var(--hi);
}

.mini {
	width: 30px;
	height: 30px;
	padding: 2px;
	background: #9cdbdb;
	border: 2px solid;
	border-color: #c9f8f8 #578888 #578888 #c9f8f8;
}

.mini.broad {
	width: 34px;
}

.mini svg {
	width: 22px;
	height: 22px;
}

.mini.broad svg {
	width: 26px;
}

/* results viewer */
.results {
	left: 0;
	top: 393px;
	width: 503px;
}

.results .left, .results .right {
	--face: #52cfb0;
	--hi: #a4ecd8;
	--lo: #2f6b5e;
	--trough: #48b098;
	background: var(--face);
}

.results .bevel {
	--face: #9cdbdb;
	--hi: #c9f8f8;
	--lo: #578888;
	border-width: 2px;
}

.check {
	padding: 2px;
	background: #9cdbdb;
	border: 1px solid #000;
	font: bold 15px/20px "Liberation Serif", serif;
	text-align: center;
}

.check div {
	background: #52cfb0;
	border: 2px solid;
	border-color: #a4ecd8 #2f6b5e #2f6b5e #a4ecd8;
}

.panes {
	display: flex;
	gap: 2px;
	padding: 1px 1px 2px;
	background: #000;
}

.results .left {
	display: flex;
	flex-direction: column;
	width: 169px;
}

.heads {
	display: flex;
	gap: 2px;
	height: 28px;
	background: #000;
	font-style: italic;
}

.heads span {
	flex: 1;
	line-height: 27px;
	text-align: center;
	background: #9cdbdb;
}

.heads .thin {
	width: 48px;
	margin: 1px;
	font-weight: normal;
	outline: 1px solid #52cfb0;
}

.heads .thin:last-child {
	width: 37px;
}

.left .lister {
	flex: 1;
}

.left .hbar {
	margin: 4px 18px 2px 0;
}

.left .option {
	height: 30px;
	margin: 1px 2px 0 6px;
}

.results .right {
	flex: 1;
	display: flex;
	flex-direction: column;
	min-width: 0;
}

.cats {
	display: flex;
	height: 29px;
	line-height: 26px;
	background: #9cdbdb;
}

.cats button {
	flex: 1;
	font-style: italic;
}

.cats .option {
	width: 61px;
	margin-left: 6px;
}

.right .list {
	height: 115px;
	padding-top: 3px;
}

.right .hbar {
	margin: 4px 18px 2px 0;
}

.steps {
	display: flex;
	align-items: center;
	gap: 5px;
	height: 25px;
}

.steps button {
	height: 24px;
	padding: 0 2px;
	white-space: nowrap;
}

.steps input {
	flex: 1;
	min-width: 0;
	height: 25px;
	padding-left: 5px;
	background: #52cfb0;
	border: 3px solid #fff;
	box-shadow: inset 2px 2px 0 #2f6b5e;
}

.zooms {
	display: flex;
	align-items: center;
	margin-top: 2px;
	height: 32px;
}

.zooms .option {
	width: 119px;
	height: 30px;
	margin: 0 2px 0 4px;
}

.zooms > label {
	height: 32px;
	line-height: 30px;
	background: #9cdbdb;
}

.zooms .go {
	--face: #1be81b;
	--hi: #80f880;
	width: 64px;
	margin: 0 4px 0 3px;
	outline: 1px solid #000;
}

.zooms .all {
	display: flex;
	align-items: center;
	gap: 3px;
	height: 18px;
	line-height: 18px;
	margin-bottom: 6px;
	background: none;
	white-space: nowrap;
}

.all input {
	appearance: none;
	width: 13px;
	height: 13px;
	background: none;
	border: 2px solid;
	border-color: #78dcc4 #3c9884 #3c9884 #78dcc4;
}

.acts {
	display: flex;
	gap: 4px;
}

.right .acts {
	justify-content: flex-end;
	padding: 2px 2px 1px;
}

.measure {
	height: 21px;
	background: #52cfb0;
	border: 1px solid #000;
	border-top: 0;
	line-height: 20px;
	text-align: center;
}

.erf {
	height: 21px;
	padding-left: 1px;
	background: #ffffcc;
	border: 1px solid #000;
	line-height: 19px;
}

.bottom {
	display: flex;
	gap: 4px;
	padding: 2px 1px;
	background: #9cdbdb;
}

.bottom .close {
	flex: 1;
	margin-right: 1px;
}

/* popview */
.popview {
	left: 608px;
	top: 334px;
	width: 497px;
}

.view {
	display: flex;
	background: #000;
}

.detail {
	flex: 1;
	min-width: 0;
	height: 247px;
	border: 3px solid;
	border-color: #2f6b5e #a4ecd8 #a4ecd8 #2f6b5e;
}

.detail text {
	font: bold 39px "DejaVu Sans Mono", monospace;
	fill: #0ff;
	stroke: #0ff;
}

.nav {
	display: flex;
	flex-direction: column;
	gap: 2px;
	padding: 2px 2px 0;
}

.nav button {
	width: 33px;
	height: 33px;
	padding: 1px;
	border: 2px solid #52b8a0;
	box-shadow: inset 3px 3px 0 var(--hi), inset -3px -3px 0 var(--lo);
}

.nav svg {
	width: 21px;
	height: 21px;
	margin: 0 auto;
	border: 1px solid #000;
}

.foot {
	padding: 2px;
	background: #52cfb0;
	border: 1px solid #000;
}

.foot button {
	width: 100%;
	height: 25px;
	line-height: 19px;
}

/* histogram */
.histogram {
	left: 1117px;
	right: 0;
	top: 340px;
	bottom: 0;
	padding-right: 0;
	border-right: 0;
}

.body {
	flex: 1;
	display: flex;
	flex-direction: column;
	min-height: 0;
	padding: 3px 0 2px 4px;
	background: #52cfb0;
	border: 1px solid #000;
	border-right: 0;
}

.upper {
	display: flex;
	gap: 3px;
	height: 288px;
}

.stats {
	display: flex;
	flex-direction: column;
	width: 102px;
	background: #9cdbdb;
	border: 2px solid #000;
	border-right-width: 1px;
}

.modes {
	display: flex;
	flex-direction: column;
	height: 136px;
	border-bottom: 1px solid #000;
}

.modes label {
	display: flex;
	align-items: center;
	gap: 7px;
	height: 27px;
	padding: 0 0 2px 6px;
}

.modes input {
	appearance: none;
	width: 10px;
	height: 10px;
	border: 2px solid;
	border-color: #c9f8f8 #578888 #578888 #c9f8f8;
	transform: rotate(45deg);
}

.modes input:checked {
	background: #c8004c;
	border-color: #578888 #fff #fff #578888;
}

.stats .lister {
	height: 115px;
}

.stats .acts {
	padding: 3px 1px;
}

.plot {
	flex: 1;
	display: flex;
	flex-direction: column;
	min-width: 0;
	background: #9cdbdb;
	border: 1px solid #000;
	border-right: 0;
	border-bottom-width: 2px;
}

.chart {
	width: 100%;
	height: 205px;
}

.chart text {
	font: bold 15px "Liberation Mono", monospace;
	fill: #000;
}

.chart .head {
	font-style: italic;
}

.plot .hbar {
	border-right: 0;
}

.plot .hbar i {
	border-right: 0;
}

.range {
	flex: 1;
	display: flex;
	border-top: 1px solid #000;
	overflow: hidden;
}

.range .lister {
	width: 94px;
	border-right: 1px solid #000;
}

.range .list {
	padding-right: 0;
}

.res {
	flex: 1;
	display: flex;
	flex-direction: column;
	min-width: 0;
	padding: 3px 0 0 3px;
}

.res .title {
	margin-left: 97px;
}

.res label {
	margin: 4px 0 2px 3px;
	line-height: 18px;
}

.res input {
	appearance: none;
	width: 100%;
	height: 14px;
	background: #80b4b4;
	border: 2px solid;
	border-color: var(--lo) var(--hi) var(--hi) var(--lo);
	border-right: 0;
}

.res input::-webkit-slider-thumb {
	appearance: none;
	width: 30px;
	height: 10px;
	background: linear-gradient(90deg, var(--lo), var(--lo)) 14px 0 / 1px 100% no-repeat var(--face);
	border: 1px solid;
	border-color: var(--hi) var(--lo) var(--lo) var(--hi);
}

.map {
	flex: 1;
	min-height: 0;
	margin-top: 9px;
	border: 2px solid #17463c;
	border-right: 0;
	border-bottom: 1px solid #000;
	box-shadow: 0 -6px 0 -5px #2f6b5e;
}

.map svg {
	width: 100%;
	height: 100%;
}

.summary {
	display: flex;
	gap: 4px;
	height: 42px;
	margin-top: 2px;
}

.summary .mini {
	height: 38px;
	margin-top: 2px;
	padding-top: 5px;
}

.summary div {
	flex: 1;
	min-width: 0;
	padding-left: 2px;
	overflow: hidden;
	line-height: 41px;
	white-space: nowrap;
	background: #9cdbdb;
	border: 1px solid #000;
	border-right: 0;
}
```
